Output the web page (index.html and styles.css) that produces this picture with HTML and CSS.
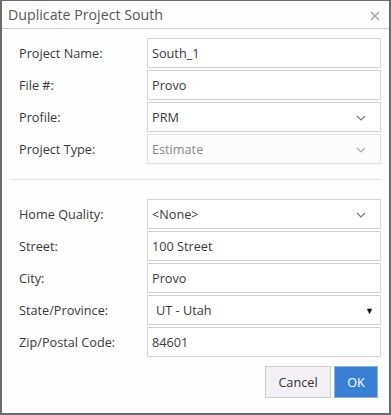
FILE: index.html
```html
<!DOCTYPE html>
<html lang="en">
<head>
    <meta charset="UTF-8">
    <meta name="viewport" content="width=device-width, initial-scale=1.0">
    <title>Duplicate Project South</title>
    <link rel="stylesheet" href="styles.css">
</head>
<body>
    <div class="dialog">
        <div class="dialog-header">
            <span class="dialog-title">Duplicate Project South</span>
            <span class="close-btn">
                <svg width="10" height="10" viewBox="0 0 10 10"><path d="M1 1L9 9M9 1L1 9" stroke="#9a9a9a" stroke-width="1.2" fill="none"/></svg>
            </span>
        </div>
        <div class="dialog-body">
            <div class="section">
                <div class="row">
                    <label class="label">Project Name:</label>
                    <div class="field">South_1</div>
                </div>
                <div class="row">
                    <label class="label">File #:</label>
                    <div class="field">Provo</div>
                </div>
                <div class="row">
                    <label class="label">Profile:</label>
                    <div class="field select">PRM
                        <svg class="chevron" width="10" height="6" viewBox="0 0 10 6"><path d="M1 1L5 5L9 1" stroke="#777" stroke-width="1.2" fill="none"/></svg>
                    </div>
                </div>
                <div class="row">
                    <label class="label">Project Type:</label>
                    <div class="field select disabled">Estimate
                        <svg class="chevron" width="10" height="6" viewBox="0 0 10 6"><path d="M1 1L5 5L9 1" stroke="#b0b0b0" stroke-width="1.2" fill="none"/></svg>
                    </div>
                </div>
            </div>
            <div class="divider"></div>
            <div class="section">
                <div class="row">
                    <label class="label">Home Quality:</label>
                    <div class="field select">&lt;None&gt;
                        <svg class="chevron" width="10" height="6" viewBox="0 0 10 6"><path d="M1 1L5 5L9 1" stroke="#777" stroke-width="1.2" fill="none"/></svg>
                    </div>
                </div>
                <div class="row">
                    <label class="label">Street:</label>
                    <div class="field">100 Street</div>
                </div>
                <div class="row">
                    <label class="label">City:</label>
                    <div class="field">Provo</div>
                </div>
                <div class="row">
                    <label class="label">State/Province:</label>
                    <div class="field native">UT - Utah
                        <span class="arrow">&#9660;</span>
                    </div>
                </div>
                <div class="row">
                    <label class="label">Zip/Postal Code:</label>
                    <div class="field">84601</div>
                </div>
            </div>
            <div class="actions">
                <button class="btn btn-cancel">Cancel</button>
                <button class="btn btn-ok">OK</button>
            </div>
        </div>
    </div>
</body>
</html>
```

FILE: styles.css
```css
body {
    margin: 0;
    font-family: 'Open Sans', sans-serif;
    font-size: 12.7px;
    color: #3a3a3a;
    background-color: #fff;
}
.dialog {
    width: 391px;
    height: 415px;
    box-sizing: border-box;
    border: 2px solid #6b6b6b;
    border-top-width: 1px;
    background-color: #fcfdfc;
}
.dialog-header {
    height: 27px;
    border-bottom: 1px solid #cfcfcf;
    display: flex;
    align-items: center;
    justify-content: space-between;
    padding: 0 9px 0 6px;
}
.dialog-title {
    font-size: 14.2px;
    color: #585858;
}
.close-btn {
    display: flex;
    margin-top: 2px;
}
.dialog-body {
    padding: 9px 8px 0 6px;
}
.row {
    display: flex;
    align-items: center;
    margin-bottom: 2px;
}
.label {
    width: 128px;
    padding-left: 11px;
    flex-shrink: 0;
}
.field {
    flex: 1;
    height: 30px;
    box-sizing: border-box;
    border: 1px solid #d2d4d6;
    background-color: #fff;
    padding: 0 4px;
    display: flex;
    align-items: center;
    position: relative;
}
.select .chevron {
    position: absolute;
    right: 14px;
    top: 12px;
}
.disabled {
    color: #888;
    border-color: #e0e0e0;
    background-color: #fcfcfc;
}
.native {
    padding-left: 8px;
}
.native .arrow {
    position: absolute;
    right: 6px;
    top: 8px;
    font-size: 9px;
    color: #111;
}
.divider {
    height: 1px;
    background-color: #e8e8e8;
    margin: 15px 0 19px 2px;
}
.actions {
    display: flex;
    justify-content: flex-end;
    gap: 3px;
    margin-top: 9px;
    padding-right: 3px;
}
.btn {
    font-family: 'Open Sans', sans-serif;
    font-size: 12.7px;
    height: 32px;
    border-radius: 0;
    cursor: pointer;
}
.btn-cancel {
    width: 66px;
    background-color: #f3f1f5;
    border: 1px solid #cccccc;
    color: #333;
}
.btn-ok {
    width: 44px;
    background-color: #3a7fd6;
    border: 1px solid #8fb2df;
    color: #fff;
}
```
